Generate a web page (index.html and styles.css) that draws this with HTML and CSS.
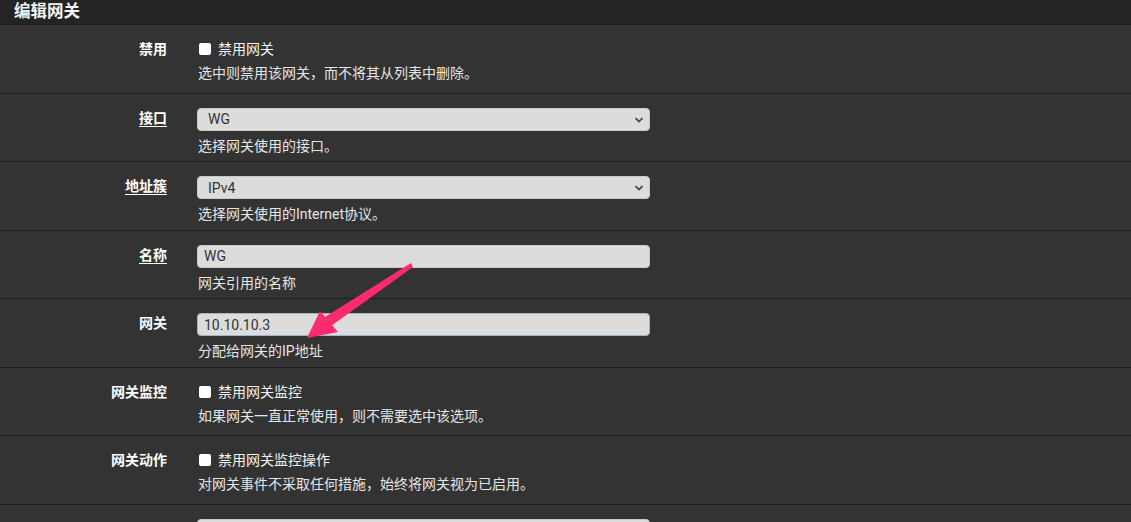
FILE: index.html
```html
<!DOCTYPE html>
<html lang="zh-CN">
<head>
    <meta charset="UTF-8">
    <title>编辑网关</title>
    <link rel="stylesheet" href="styles.css">
</head>
<body>
    <div class="panel">
        <div class="panel-heading">编辑网关</div>

        <div class="form-row">
            <div class="row-label">禁用</div>
            <div class="row-field">
                <label class="chk"><input type="checkbox">禁用网关</label>
                <div class="help">选中则禁用该网关，而不将其从列表中删除。</div>
            </div>
        </div>

        <div class="form-row">
            <div class="row-label"><u>接口</u></div>
            <div class="row-field">
                <div class="select-wrap">
                    <select class="ctrl"><option>WG</option></select>
                    <svg class="caret" width="10" height="8" viewBox="0 0 10 8"><path d="M1.5 2.2 L5 5.6 L8.5 2.2" fill="none" stroke="#444" stroke-width="1.8"/></svg>
                </div>
                <div class="help">选择网关使用的接口。</div>
            </div>
        </div>

        <div class="form-row">
            <div class="row-label"><u>地址簇</u></div>
            <div class="row-field">
                <div class="select-wrap">
                    <select class="ctrl"><option>IPv4</option></select>
                    <svg class="caret" width="10" height="8" viewBox="0 0 10 8"><path d="M1.5 2.2 L5 5.6 L8.5 2.2" fill="none" stroke="#444" stroke-width="1.8"/></svg>
                </div>
                <div class="help">选择网关使用的Internet协议。</div>
            </div>
        </div>

        <div class="form-row">
            <div class="row-label"><u>名称</u></div>
            <div class="row-field">
                <input class="ctrl text" type="text" value="WG">
                <div class="help">网关引用的名称</div>
            </div>
        </div>

        <div class="form-row">
            <div class="row-label">网关</div>
            <div class="row-field">
                <input class="ctrl text focus" type="text" value="10.10.10.3">
                <div class="help">分配给网关的IP地址</div>
            </div>
        </div>

        <div class="form-row">
            <div class="row-label">网关监控</div>
            <div class="row-field">
                <label class="chk"><input type="checkbox">禁用网关监控</label>
                <div class="help">如果网关一直正常使用，则不需要选中该选项。</div>
            </div>
        </div>

        <div class="form-row">
            <div class="row-label">网关动作</div>
            <div class="row-field">
                <label class="chk"><input type="checkbox">禁用网关监控操作</label>
                <div class="help">对网关事件不采取任何措施，始终将网关视为已启用。</div>
            </div>
        </div>

        <div class="form-row">
            <div class="row-label"></div>
            <div class="row-field">
                <input class="ctrl text" type="text" value="">
            </div>
        </div>
    </div>

    <!-- annotation arrow drawn over the form -->
    <svg class="annot" width="1131" height="522" viewBox="0 0 1131 522">
        <polygon points="411,263 413,267 331,326 325,317" fill="#fb2b6d"/>
        <polygon points="307,338 320,311 338,332" fill="#fb2b6d"/>
    </svg>
</body>
</html>
```

FILE: styles.css
```css
body {
    margin: 0;
    background-color: #333333;
    font-family: Roboto, "Noto Sans CJK SC", sans-serif;
    color: #ffffff;
    font-size: 14px;
    overflow: hidden;
}
.panel {
    background-color: #333333;
}
.panel-heading {
    height: 24px;
    line-height: 23px;
    padding-left: 14px;
    background-color: #242424;
    border-bottom: 1px solid #1c1c1c;
    font-size: 16.5px;
    font-weight: bold;
    color: #f4f4f4;
}
.form-row {
    display: grid;
    grid-template-columns: 167px 453px;
    column-gap: 30px;
    box-sizing: border-box;
    height: 68.57px;
    padding-top: 14px;
    border-bottom: 1px solid #1e1e1e;
}
.row-label {
    text-align: right;
    font-weight: bold;
    line-height: 18px;
    padding-top: 1px;
    color: #ffffff;
}
.row-label u {
    text-underline-offset: 3px;
}
.row-field {
    display: flex;
    flex-direction: column;
}
.chk {
    display: flex;
    align-items: center;
    height: 18px;
    line-height: 18px;
    margin-top: 1px;
    color: #f2f2f2;
}
.chk input {
    appearance: none;
    width: 12px;
    height: 12px;
    margin: 0 7px 0 2px;
    background-color: #ffffff;
    border-radius: 2px;
}
.help {
    margin-top: 6px;
    margin-left: 1px;
    line-height: 18px;
    color: #e6e6e6;
}
.select-wrap {
    position: relative;
    height: 23px;
}
.ctrl {
    appearance: none;
    box-sizing: border-box;
    width: 453px;
    height: 23px;
    margin: 0;
    background-color: #dcdcdc;
    border: 1px solid #c8c8c8;
    border-radius: 4px;
    font-family: Roboto, "Noto Sans CJK SC", sans-serif;
    font-size: 14px;
    color: #333333;
    padding: 0 0 0 10px;
    outline: none;
}
.ctrl.text {
    padding-left: 6px;
}
.ctrl.focus {
    border-color: #9fb4c8;
}
.caret {
    position: absolute;
    right: 6px;
    top: 8px;
}
.annot {
    position: absolute;
    left: 0;
    top: 0;
    pointer-events: none;
}
```
